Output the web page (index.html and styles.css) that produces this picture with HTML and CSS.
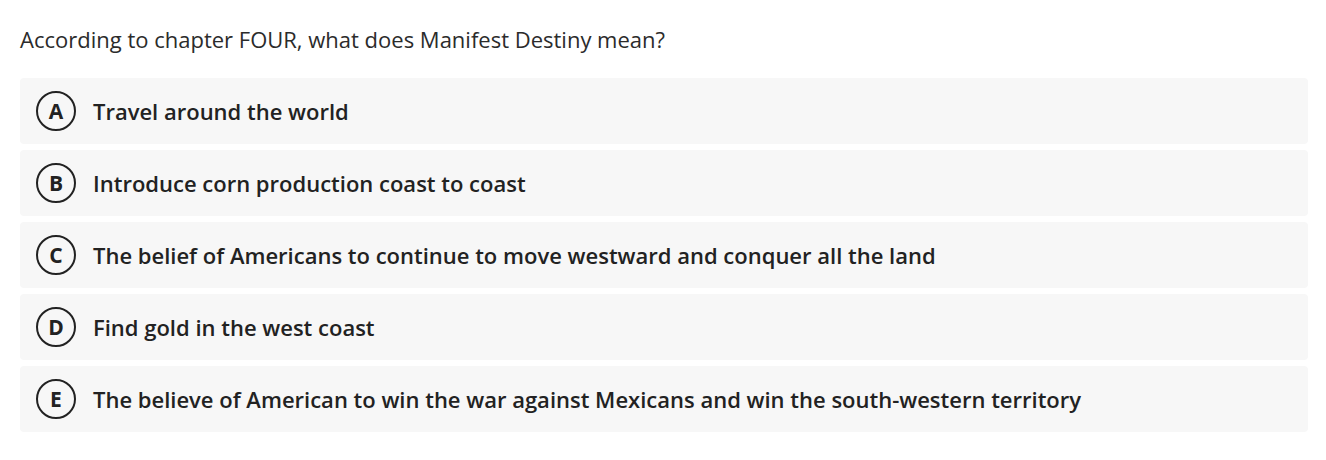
FILE: index.html
```html
<!DOCTYPE html>
<html lang="en">
<head>
<meta charset="utf-8">
<title>Question</title>
<link rel="stylesheet" href="styles.css">
</head>
<body>
<div class="quiz">
  <p class="question">According to chapter FOUR, what does Manifest Destiny mean?</p>
  <ul class="options">
    <li class="option"><span class="letter">A</span><span class="label">Travel around the world</span></li>
    <li class="option"><span class="letter">B</span><span class="label">Introduce corn production coast to coast</span></li>
    <li class="option"><span class="letter">C</span><span class="label">The belief of Americans to continue to move westward and conquer all the land</span></li>
    <li class="option"><span class="letter">D</span><span class="label">Find gold in the west coast</span></li>
    <li class="option"><span class="letter">E</span><span class="label">The believe of American to win the war against Mexicans and win the south-western territory</span></li>
  </ul>
</div>
</body>
</html>
```
FILE: styles.css
```css
html, body {
  margin: 0;
  padding: 0;
  background: #ffffff;
}
body {
  font-family: "Open Sans", "Noto Sans", sans-serif;
  color: #222222;
}
.quiz {
  padding: 24px 18px 0 20px;
}
.question {
  margin: 0 0 24px 0;
  font-size: 22px;
  line-height: 30px;
  font-weight: 400;
  color: #2b2b2b;
}
.options {
  list-style: none;
  margin: 0;
  padding: 0;
  display: flex;
  flex-direction: column;
  gap: 6px;
}
.option {
  display: flex;
  align-items: center;
  gap: 17px;
  height: 66px;
  padding: 0 16px;
  background: #f7f7f7;
  border-radius: 4px;
}
.letter {
  box-sizing: border-box;
  width: 40px;
  height: 40px;
  flex: 0 0 40px;
  border: 2.5px solid #222222;
  border-radius: 50%;
  display: flex;
  align-items: center;
  justify-content: center;
  font-size: 21px;
  font-weight: 700;
  line-height: 1;
  color: #222222;
}
.label {
  font-size: 22px;
  font-weight: 600;
  line-height: 30px;
  color: #222222;
}
```
